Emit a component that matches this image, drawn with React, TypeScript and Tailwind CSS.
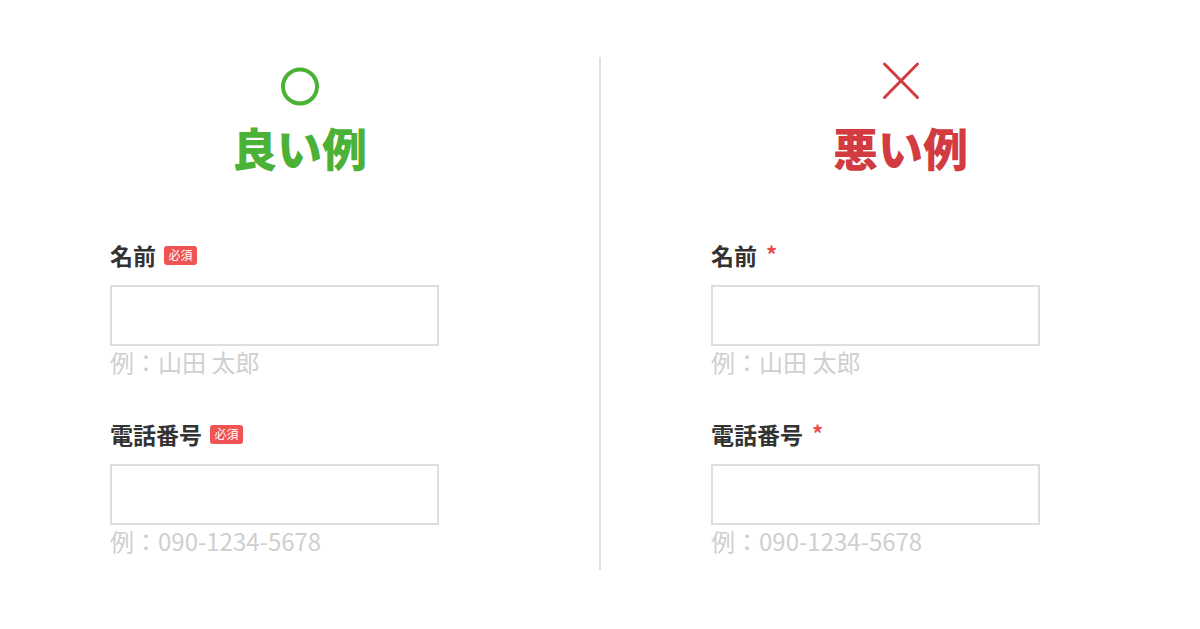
import React from 'react';

// 良い例 / 悪い例 の比較図（フォームの必須表示）

type Field = { label: string; placeholder: string };

const fields: Field[] = [
  { label: '名前', placeholder: '例：山田 太郎' },
  { label: '電話番号', placeholder: '例：090-1234-5678' },
];

const Circle = () => (
  <svg width="40" height="40" viewBox="0 0 40 40" className="block">
    <circle cx="20" cy="20.5" r="17" fill="none" stroke="#4bb137" strokeWidth="4" />
  </svg>
);

const Cross = () => (
  <svg width="40" height="40" viewBox="0 0 40 40" className="block overflow-visible">
    <path d="M3.5 -2L36.5 31.5M36.5 -2L3.5 31.5" stroke="#d23c41" strokeWidth="3" strokeLinecap="round" />
  </svg>
);

function FormField({ field, good }: { field: Field; good: boolean }) {
  return (
    <div className="flex flex-col">
      <div className="flex items-center h-[26px]">
        <span className="text-[23px] font-bold text-[#333] leading-none">{field.label}</span>
        {good ? (
          <span className="ml-[8px] inline-flex items-center justify-center w-[33px] h-[19px] rounded-[3px] bg-[#f05353] text-white text-[12px] leading-none">
            必須
          </span>
        ) : (
          <span className="ml-[9px] text-[22px] font-bold text-[#ee4b4b] leading-none -mt-[4px]">*</span>
        )}
      </div>
      <div className="mt-[17px] w-[329px] h-[61px] border-2 border-[#dedede] bg-white" />
      <div className="mt-[1px] text-[24px] text-[#cfcfcf] leading-[30px]">{field.placeholder}</div>
    </div>
  );
}

function Column({ good }: { good: boolean }) {
  return (
    <div className="w-[599px] flex flex-col">
      <div className="flex flex-col items-center pt-[66px]">
        {good ? <Circle /> : <Cross />}
        <div
          className={`mt-[14px] text-[45px] font-black leading-[56px] ${good ? 'text-[#4bb137]' : 'text-[#d23c41]'}`}
        >
          {good ? '良い例' : '悪い例'}
        </div>
      </div>
      <div className="pl-[110px] pt-[66px] flex flex-col gap-[44px]">
        {fields.map((f) => (
          <FormField key={f.label} field={f} good={good} />
        ))}
      </div>
    </div>
  );
}

export default function App() {
  return (
    <div
      className="w-[1200px] h-[629px] bg-white flex overflow-hidden"
      style={{ fontFamily: '"Noto Sans CJK JP", "Noto Sans", sans-serif' }}
    >
      <Column good />
      <div className="w-[2px] h-[513px] mt-[57px] bg-[#e0e0e0]" />
      <Column good={false} />
    </div>
  );
}
